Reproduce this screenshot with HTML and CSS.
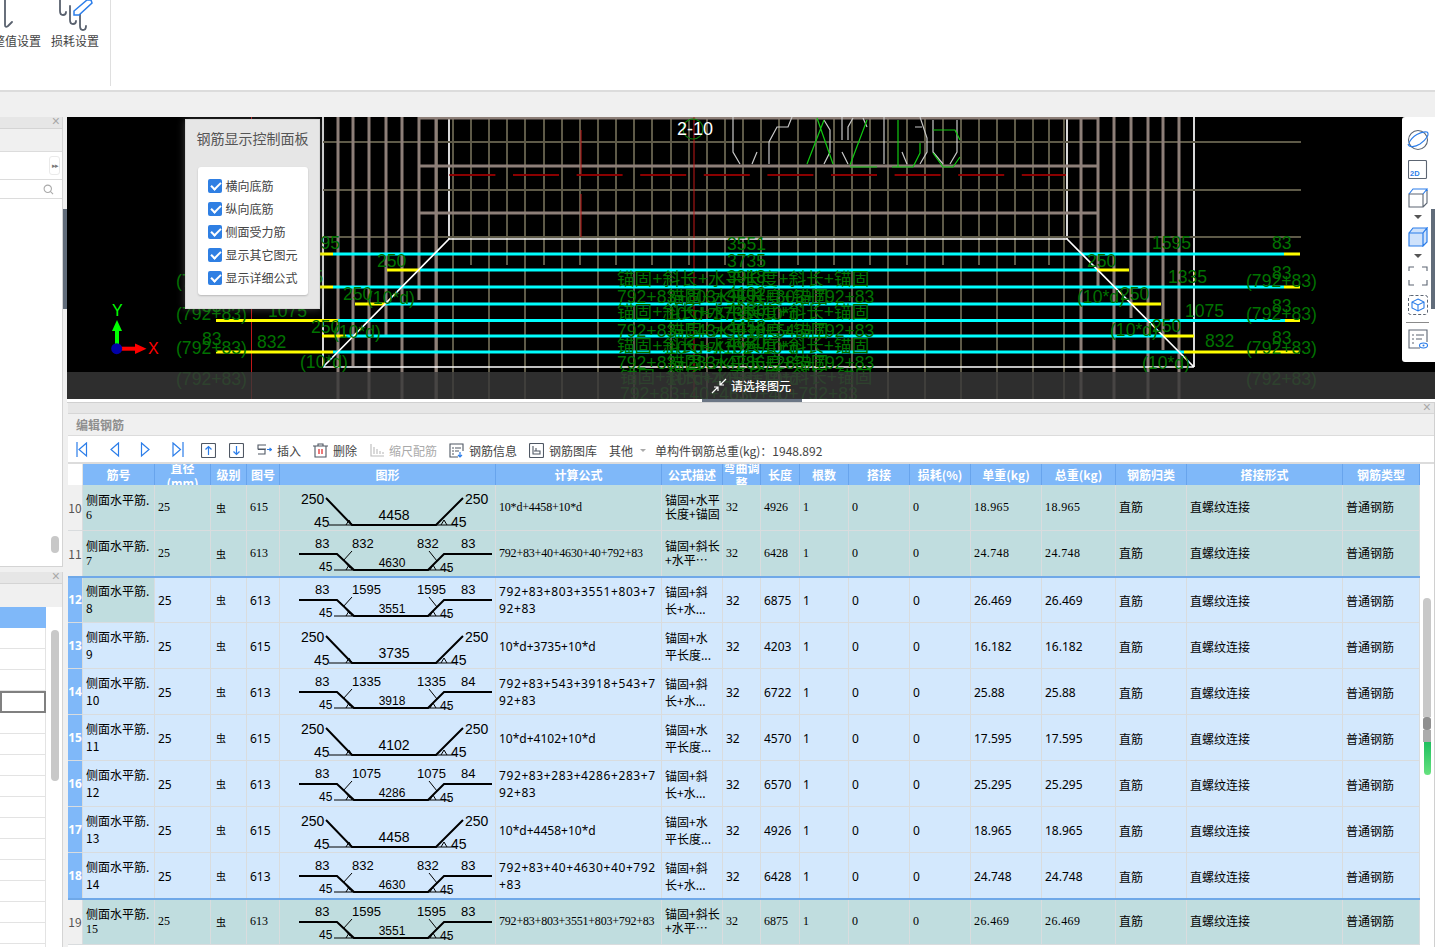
FILE: index.html
```html
<!DOCTYPE html>
<html lang="zh-CN">
<head>
<meta charset="utf-8">
<title>编辑钢筋</title>
<link rel="stylesheet" href="styles.css">
</head>
<body>
<svg class="sprite" aria-hidden="true">
  <symbol id="s615" viewBox="0 0 216 45">
    <path class="thick" d="M46 14L72 41H156L183 14"/>
    <path class="thin" d="M49 41H72M156 41H176M66 41L69 36L72 41M161 41L164 36L167 41"/>
  </symbol>
  <symbol id="s613" viewBox="0 0 216 45">
    <path class="thick" d="M19 24H57L74 40H148L164 24H212"/>
    <path class="thin" d="M54 40H74M148 40H170M63 31L72 21M149 21L157 31M66 40L69 35L72 40M150 40L153 35L156 40M60 26L70 38M160 28L148 40"/>
  </symbol>
</svg>
<div class="app">
  <header class="ribbon">
    <div class="rgroup">
      <div class="ritem clipped">
        <svg class="ricon-a" viewBox="0 0 14 32"><path class="hook" d="M5 0V25Q5 28 8 26L12 22"/></svg>
        <span class="rlabel">调整值设置</span>
      </div>
      <div class="ritem second">
        <svg class="ricon-b" viewBox="0 0 48 32"><path class="hook" d="M9 0V11Q9 15 12 15Q15 15 15 12M19 6V20Q19 24 22 24Q25 24 25 21M29 14V26Q29 30 32 30Q35 30 35 26"/><path class="pencil" d="M23 11L36 0L40 0L41 3L28 15L23 15Z"/></svg>
        <span class="rlabel">损耗设置</span>
      </div>
    </div>
  </header>
  <div class="subbar"></div>
  <div class="main">
    <aside class="side">
      <section class="spanel first">
        <div class="phead"><span class="close">×</span></div>
        <div class="pgray"></div>
        <div class="pexpand"><span class="expand">▸▸</span></div>
        <div class="psearch">
          <svg class="searchicon" viewBox="0 0 12 12"><circle cx="5.2" cy="5.2" r="4"/><path d="M8 8L11 11"/></svg>
        </div>
        <div class="pbody"><span class="thumb thumb-a"></span></div>
      </section>
      <section class="spanel last">
        <div class="phead"><span class="close">×</span></div>
        <div class="pgray2"></div>
        <div class="plist">
          <div class="lcol">
            <div class="li active"></div><div class="li"></div><div class="li"></div><div class="li"></div><div class="li current"></div>
            <div class="li"></div><div class="li"></div><div class="li"></div><div class="li"></div>
            <div class="li"></div><div class="li"></div><div class="li"></div><div class="li"></div>
            <div class="li"></div><div class="li"></div><div class="li"></div><div class="li"></div>
          </div>
          <span class="thumb thumb-b"></span>
        </div>
      </section>
    </aside>
    <div class="vbar"><span class="vhandle"></span></div>
    <div class="work">
      <div class="viewport">
        <svg class="cad" viewBox="67 117 1368 282" width="1368" height="282">
          <g class="wline">
            <path d="M323 117V367M1194 117V367M449 117V239M1067 117V239"/>
          </g>
          <g class="olive">
            <path d="M323 142H1301M323 190H1301M323 237H1301"/>
            <path d="M437 117V399M453 117V399M489 117V399M525 117V399M562 117V399M598 117V399M634 117V399M671 117V399M707 117V399M743 117V399M779 117V399M816 117V399M852 117V399M888 117V399M925 117V399M961 117V399M997 117V399M1033 117V399M1064 117V399"/>
            <path d="M471 117V265M507 117V265M544 117V265M580 117V265M616 117V265M652 117V265M689 117V265M725 117V265M761 117V265M798 117V265M834 117V265M870 117V265M907 117V265M943 117V265M979 117V265M1015 117V265M1049 117V265"/>
          </g>
          <g class="brown">
            <path d="M419 118H1098M419 166H1098M419 213H1098"/>
            <path d="M338 117V399M353 117V366M369 117V399M386 117V335M402 117V399M419 117V300M436 117V399"/>
            <path d="M1081 117V399M1098 117V287M1114 117V399M1131 117V318M1148 117V399M1163 117V350M1179 117V399"/>
          </g>
          <path class="reddash" d="M449.4 175H1066"/>
          <path class="redline" d="M251.5 117V399M694 117V399M581 130V174M581 194V237"/>
          <g class="cyan">
            <path d="M333 254H1284M420 270H1097M333 287H1284M385 304H1131M338 320.500H1285M346 336H1163M333 352H1184"/>
          </g>
          <g class="yellow">
            <path d="M320 254H333M1284 254H1300M387 270H420M1097 270H1129M320 287H333M1284 287H1300M355 304H385M1131 304H1161M216 320.500H338M1285 320.500H1300M322 336H346M1163 336H1194M216 352H333M1184 352H1300"/>
          </g>
          <g class="wline">
            <path d="M323 367H1194M449 239H1067M449 239L323 367M1067 239L1194 367"/>
          </g>
          <g class="graytop">
            <path d="M733 117V152L740 164M757 152L752 164M792 117L788 127H777L769 142V164M824 120L830 130V152L824 164M842 117V140M842 152L848 164M848 140V127L853 118M863 118L867 127M884 117V164M915 127H922M920 117L927 138V152L920 164M902 152L907 164M933 120V152L943 164M957 120V152L950 164"/>
          </g>
          <g class="greentop">
            <circle cx="693" cy="129" r="10"/>
            <path d="M817 118L833 164M824 120L807 164M867 120L850 165M850 167H877M898 120V167M892 167H913M913 167L920 153V143M933 130H955L960 140M933 153L943 167H953L960 157"/>
          </g>
          <text class="wt" x="677" y="135">2-10</text>
          <g class="gt">
            <text x="1152" y="249">1595</text><text x="1272" y="249">83</text><text x="301" y="249">1595</text><text x="201" y="249">83</text>
            <text x="377" y="267">250</text><text x="1087" y="267">250</text>
            <text x="727" y="250">3551</text><text x="727" y="267">3735</text><text x="727" y="283">3918</text><text x="727" y="300">4102</text><text x="727" y="316">4286</text><text x="727" y="333">4458</text><text x="727" y="349">4630</text>
            <text x="1246" y="287">(792+83)</text><text x="1246" y="320">(792+83)</text><text x="1246" y="354">(792+83)</text><text x="1246" y="385">(792+83)</text>
            <text x="176" y="287">(792+83)</text><text x="176" y="320">(792+83)</text><text x="176" y="354">(792+83)</text><text x="176" y="385">(792+83)</text>
            <text x="1272" y="279">83</text><text x="1272" y="312">83</text><text x="1272" y="344">83</text>
            <text x="202" y="312">83</text><text x="202" y="345">83</text>
            <text x="1168" y="283">1335</text><text x="284" y="283">1335</text>
            <text x="1185" y="317">1075</text><text x="268" y="317">1075</text>
            <text x="1205" y="347">832</text><text x="257" y="348">832</text>
            <text x="343" y="300">250</text><text x="1120" y="300">250</text>
            <text x="311" y="333">250</text><text x="1152" y="332">250</text>
            <text x="367" y="304">(10*d)</text><text x="1077" y="303">(10*d)</text>
            <text x="333" y="338">(10*d)</text><text x="1110" y="336">(10*d)</text>
            <text x="300" y="368">(10*d)</text><text x="1142" y="369">(10*d)</text>
            <text x="617" y="285">锚固+斜长+水平长度+斜长+锚固</text>
            <text x="617" y="303">792+83+803+3551+803+792+83</text>
            <text x="667" y="303">锚固+水平长度+锚固</text>
            <text x="667" y="320">10*d+3735+10*d</text>
            <text x="617" y="318">锚固+斜长+水平长度+斜长+锚固</text>
            <text x="617" y="337">792+83+543+3918+543+792+83</text>
            <text x="667" y="337">锚固+水平长度+锚固</text>
            <text x="667" y="354">10*d+4102+10*d</text>
            <text x="617" y="352">锚固+斜长+水平长度+斜长+锚固</text>
            <text x="617" y="369">792+83+283+4286+283+792+83</text>
            <text x="667" y="369">锚固+水平长度+锚固</text>
            <text x="667" y="385">10*d+4458+10*d</text>
            <text x="620" y="383">锚固+斜长+水平长度+斜长+锚固</text>
            <text x="620" y="400">792+83+40+4630+40+792+83</text>
          </g>
          <g class="axes">
            <path class="ay" d="M117 345V330"/><path class="ayh" d="M117 320L122 331H112Z"/>
            <path class="ax" d="M120 348.700H135"/><path class="axh" d="M146.500 348.700L135 343.500V354Z"/>
            <circle class="ao" cx="116.700" cy="348.700" r="5.500"/>
            <text class="ayt" x="112" y="316">Y</text><text class="axt" x="148" y="354">X</text>
          </g>
        </svg>
        <div class="status">
          <svg class="sicon" viewBox="0 0 16 16"><path d="M15 1L9 7M9 3V7H13M1 15L7 9M3 9H7V13"/></svg>
          <span>请选择图元</span>
        </div>
        <div class="control">
          <div class="ctitle">钢筋显示控制面板</div>
          <div class="ccard">
            <label class="copt"><span class="cb"></span>横向底筋</label>
            <label class="copt"><span class="cb"></span>纵向底筋</label>
            <label class="copt"><span class="cb"></span>侧面受力筋</label>
            <label class="copt"><span class="cb"></span>显示其它图元</label>
            <label class="copt"><span class="cb"></span>显示详细公式</label>
          </div>
        </div>
        <div class="vtools">
          <svg class="vt v-orbit" viewBox="0 0 22 22"><circle class="dk" cx="11" cy="11" r="9.500"/><path class="bl" d="M2 14C5 7 14 2 20 3C23 5 19 11 13 15C8 18 2 19 1 15"/></svg>
          <svg class="vt v-2d" viewBox="0 0 20 20"><rect class="dk" x="0.500" y="0.500" width="18" height="18" rx="1"/><text class="t2d" x="2" y="16">2D</text></svg>
          <svg class="vt v-cube" viewBox="0 0 20 20"><path class="dk" d="M1 6H15V19H1ZM15 19L19 15V2"/><path class="bl" d="M1 6L5 1H19L15 6M19 1V3"/></svg>
          <span class="caret"></span>
          <svg class="vt v-cube" viewBox="0 0 20 20"><path class="blf" d="M1 6H15V19H1ZM15 19L19 15V1L15 6ZM1 6L5 1H19L15 6"/></svg>
          <span class="caret"></span>
          <svg class="vt v-dash" viewBox="0 0 20 20"><path class="dk" d="M1 5V1H6M14 1H19V5M19 14V19H14M6 19H1V14"/></svg>
          <svg class="vt v-dashcube" viewBox="0 0 20 20"><rect class="dash" x="0.500" y="0.500" width="19" height="19" rx="2"/><path class="bl" d="M10 4L16 7V13L10 16L4 13V7ZM4 7L10 10L16 7M10 10V16"/></svg>
          <span class="vsep"></span>
          <svg class="vt v-list" viewBox="0 0 20 20"><path class="dk" d="M12 19H1V1H19V13"/><path class="dk" d="M4 6H6M8 6H16M4 10H6M8 10H14M4 14H6"/><ellipse class="bl" cx="15.500" cy="16.500" rx="4" ry="2.500"/><circle class="bld" cx="15.500" cy="16.500" r="1"/></svg>
        </div>
        <span class="rhandle"></span>
      </div>
      <div class="hsplit"><span class="hhandle"></span></div>
      <section class="edit">
        <div class="ehead"><span class="close">×</span></div>
        <div class="etitle">编辑钢筋</div>
        <div class="toolbar">
          <span class="tb"><svg class="ti" viewBox="0 0 12 16"><path class="blue" d="M1 0V15M10.500 1L3 7.500L10.500 14Z"/></svg></span>
          <span class="tb"><svg class="ti" viewBox="0 0 12 16"><path class="blue" d="M9.500 1L2 7.500L9.500 14Z"/></svg></span>
          <span class="tb"><svg class="ti" viewBox="0 0 12 16"><path class="blue" d="M1.500 1L9 7.500L1.500 14Z"/></svg></span>
          <span class="tb"><svg class="ti" viewBox="0 0 12 16"><path class="blue" d="M1 1L8.500 7.500L1 14ZM11 0V15"/></svg></span>
          <span class="tb"><svg class="ti ti-w" viewBox="0 0 15 15"><rect class="dark" x="0.500" y="0.500" width="14" height="14" rx="1"/><path class="blue" d="M7.500 12V3.500M4.500 6.500L7.500 3.500L10.500 6.500"/></svg></span>
          <span class="tb"><svg class="ti ti-w" viewBox="0 0 15 15"><rect class="dark" x="0.500" y="0.500" width="14" height="14" rx="1"/><path class="blue" d="M7.500 3V11.500M4.500 8.500L7.500 11.500L10.500 8.500"/></svg></span>
          <span class="tb"><svg class="ti ti-w" viewBox="0 0 15 15"><path class="dark" d="M9 2H1V6H9M1 11H8V6.500H1"/><path class="blue" d="M10 6.500H14M12.500 5L14.500 6.500L12.500 8"/></svg>插入</span>
          <span class="tb"><svg class="ti ti-w" viewBox="0 0 15 15"><path class="dark" d="M2 3H13V14H2ZM0 3H15M5 3V1H10V3"/><path class="red" d="M6 6V11M9 6V11"/></svg>删除</span>
          <span class="tb off"><svg class="ti ti-w" viewBox="0 0 15 15"><path class="grayl" d="M2 1V13H15M5 4V11M8 6V11M11 8V11M14 9V11"/></svg>缩尺配筋</span>
          <span class="tb"><svg class="ti ti-w" viewBox="0 0 15 15"><path class="dark" d="M9 14H1V1H14V8"/><path class="dark" d="M3 5H5M6 5H12M3 8H5M6 8H10M3 11H5"/><path class="blue" d="M11 9V14M9 12L11 14L13 12"/></svg>钢筋信息</span>
          <span class="tb"><svg class="ti ti-w" viewBox="0 0 15 15"><rect class="dark" x="0.500" y="0.500" width="14" height="14" rx="1"/><path class="dark" d="M4 3V11H11V8H5M7 8V5"/></svg>钢筋图库</span>
          <span class="tb">其他<span class="tcaret"></span></span>
          <span class="ttotal">单构件钢筋总重(kg)：1948.892</span>
        </div>
        <div class="tablewrap">
          <div class="grid">
            <div class="row head">
              <div class="c"></div><div class="c">筋号</div><div class="c">直径<br>(mm)</div><div class="c">级别</div><div class="c">图号</div><div class="c">图形</div><div class="c">计算公式</div><div class="c">公式描述</div><div class="c">弯曲调<br>整</div><div class="c">长度</div><div class="c">根数</div><div class="c">搭接</div><div class="c">损耗(%)</div><div class="c">单重(kg)</div><div class="c">总重(kg)</div><div class="c">钢筋归类</div><div class="c">搭接形式</div><div class="c">钢筋类型</div>
            </div>

            <div class="row teal">
              <div class="c num">10</div><div class="c name">侧面水平筋.<br><span class="d">6</span></div><div class="c d">25</div><div class="c lv">虫</div><div class="c d">615</div>
              <div class="c shape"><svg class="fig" viewBox="0 0 216 45"><use href="#s615"/><text class="l14" x="21" y="20">250</text><text class="l14" x="34" y="43">45</text><text class="l14 mid" x="114" y="36">4458</text><text class="l14" x="185" y="20">250</text><text class="l14" x="171" y="43">45</text></svg></div>
              <div class="c d fd">10*d+4458+10*d</div><div class="c cj">锚固+水平<br>长度+锚固</div><div class="c d">32</div><div class="c d">4926</div><div class="c d">1</div><div class="c d">0</div><div class="c d">0</div><div class="c d wt2">18.965</div><div class="c d wt2">18.965</div><div class="c tx">直筋</div><div class="c tx">直螺纹连接</div><div class="c tx">普通钢筋</div>
            </div>

            <div class="row teal">
              <div class="c num">11</div><div class="c name">侧面水平筋.<br><span class="d">7</span></div><div class="c d">25</div><div class="c lv">虫</div><div class="c d">613</div>
              <div class="c shape"><svg class="fig" viewBox="0 0 216 45"><use href="#s613"/><text class="l13" x="35" y="18">83</text><text class="l13" x="72" y="18">832</text><text class="l13" x="137" y="18">832</text><text class="l13" x="181" y="18">83</text><text class="l12" x="39" y="41">45</text><text class="l12 mid" x="112" y="37">4630</text><text class="l12" x="160" y="42">45</text></svg></div>
              <div class="c d fd">792+83+40+4630+40+792+83</div><div class="c cj">锚固+斜长<br>+水平…</div><div class="c d">32</div><div class="c d">6428</div><div class="c d">1</div><div class="c d">0</div><div class="c d">0</div><div class="c d wt2">24.748</div><div class="c d wt2">24.748</div><div class="c tx">直筋</div><div class="c tx">直螺纹连接</div><div class="c tx">普通钢筋</div>
            </div>

            <div class="row sel top">
              <div class="c num">12</div><div class="c name act">侧面水平筋.<br>8</div><div class="c">25</div><div class="c lv">虫</div><div class="c">613</div>
              <div class="c shape"><svg class="fig" viewBox="0 0 216 45"><use href="#s613"/><text class="l13" x="35" y="18">83</text><text class="l13" x="72" y="18">1595</text><text class="l13" x="137" y="18">1595</text><text class="l13" x="181" y="18">83</text><text class="l12" x="39" y="41">45</text><text class="l12 mid" x="112" y="37">3551</text><text class="l12" x="160" y="42">45</text></svg></div>
              <div class="c long">792+83+803+3551+803+7<br>92+83</div><div class="c cj">锚固+斜<br>长+水...</div><div class="c">32</div><div class="c">6875</div><div class="c">1</div><div class="c">0</div><div class="c">0</div><div class="c">26.469</div><div class="c">26.469</div><div class="c">直筋</div><div class="c">直螺纹连接</div><div class="c">普通钢筋</div>
            </div>

            <div class="row sel">
              <div class="c num">13</div><div class="c name">侧面水平筋.<br>9</div><div class="c">25</div><div class="c lv">虫</div><div class="c">615</div>
              <div class="c shape"><svg class="fig" viewBox="0 0 216 45"><use href="#s615"/><text class="l14" x="21" y="20">250</text><text class="l14" x="34" y="43">45</text><text class="l14 mid" x="114" y="36">3735</text><text class="l14" x="185" y="20">250</text><text class="l14" x="171" y="43">45</text></svg></div>
              <div class="c">10*d+3735+10*d</div><div class="c cj">锚固+水<br>平长度...</div><div class="c">32</div><div class="c">4203</div><div class="c">1</div><div class="c">0</div><div class="c">0</div><div class="c">16.182</div><div class="c">16.182</div><div class="c">直筋</div><div class="c">直螺纹连接</div><div class="c">普通钢筋</div>
            </div>

            <div class="row sel">
              <div class="c num">14</div><div class="c name">侧面水平筋.<br>10</div><div class="c">25</div><div class="c lv">虫</div><div class="c">613</div>
              <div class="c shape"><svg class="fig" viewBox="0 0 216 45"><use href="#s613"/><text class="l13" x="35" y="18">83</text><text class="l13" x="72" y="18">1335</text><text class="l13" x="137" y="18">1335</text><text class="l13" x="181" y="18">84</text><text class="l12" x="39" y="41">45</text><text class="l12 mid" x="112" y="37">3918</text><text class="l12" x="160" y="42">45</text></svg></div>
              <div class="c long">792+83+543+3918+543+7<br>92+83</div><div class="c cj">锚固+斜<br>长+水...</div><div class="c">32</div><div class="c">6722</div><div class="c">1</div><div class="c">0</div><div class="c">0</div><div class="c">25.88</div><div class="c">25.88</div><div class="c">直筋</div><div class="c">直螺纹连接</div><div class="c">普通钢筋</div>
            </div>

            <div class="row sel">
              <div class="c num">15</div><div class="c name">侧面水平筋.<br>11</div><div class="c">25</div><div class="c lv">虫</div><div class="c">615</div>
              <div class="c shape"><svg class="fig" viewBox="0 0 216 45"><use href="#s615"/><text class="l14" x="21" y="20">250</text><text class="l14" x="34" y="43">45</text><text class="l14 mid" x="114" y="36">4102</text><text class="l14" x="185" y="20">250</text><text class="l14" x="171" y="43">45</text></svg></div>
              <div class="c">10*d+4102+10*d</div><div class="c cj">锚固+水<br>平长度...</div><div class="c">32</div><div class="c">4570</div><div class="c">1</div><div class="c">0</div><div class="c">0</div><div class="c">17.595</div><div class="c">17.595</div><div class="c">直筋</div><div class="c">直螺纹连接</div><div class="c">普通钢筋</div>
            </div>

            <div class="row sel">
              <div class="c num">16</div><div class="c name">侧面水平筋.<br>12</div><div class="c">25</div><div class="c lv">虫</div><div class="c">613</div>
              <div class="c shape"><svg class="fig" viewBox="0 0 216 45"><use href="#s613"/><text class="l13" x="35" y="18">83</text><text class="l13" x="72" y="18">1075</text><text class="l13" x="137" y="18">1075</text><text class="l13" x="181" y="18">84</text><text class="l12" x="39" y="41">45</text><text class="l12 mid" x="112" y="37">4286</text><text class="l12" x="160" y="42">45</text></svg></div>
              <div class="c long">792+83+283+4286+283+7<br>92+83</div><div class="c cj">锚固+斜<br>长+水...</div><div class="c">32</div><div class="c">6570</div><div class="c">1</div><div class="c">0</div><div class="c">0</div><div class="c">25.295</div><div class="c">25.295</div><div class="c">直筋</div><div class="c">直螺纹连接</div><div class="c">普通钢筋</div>
            </div>

            <div class="row sel">
              <div class="c num">17</div><div class="c name">侧面水平筋.<br>13</div><div class="c">25</div><div class="c lv">虫</div><div class="c">615</div>
              <div class="c shape"><svg class="fig" viewBox="0 0 216 45"><use href="#s615"/><text class="l14" x="21" y="20">250</text><text class="l14" x="34" y="43">45</text><text class="l14 mid" x="114" y="36">4458</text><text class="l14" x="185" y="20">250</text><text class="l14" x="171" y="43">45</text></svg></div>
              <div class="c">10*d+4458+10*d</div><div class="c cj">锚固+水<br>平长度...</div><div class="c">32</div><div class="c">4926</div><div class="c">1</div><div class="c">0</div><div class="c">0</div><div class="c">18.965</div><div class="c">18.965</div><div class="c">直筋</div><div class="c">直螺纹连接</div><div class="c">普通钢筋</div>
            </div>

            <div class="row sel">
              <div class="c num">18</div><div class="c name">侧面水平筋.<br>14</div><div class="c">25</div><div class="c lv">虫</div><div class="c">613</div>
              <div class="c shape"><svg class="fig" viewBox="0 0 216 45"><use href="#s613"/><text class="l13" x="35" y="18">83</text><text class="l13" x="72" y="18">832</text><text class="l13" x="137" y="18">832</text><text class="l13" x="181" y="18">83</text><text class="l12" x="39" y="41">45</text><text class="l12 mid" x="112" y="37">4630</text><text class="l12" x="160" y="42">45</text></svg></div>
              <div class="c long">792+83+40+4630+40+792<br>+83</div><div class="c cj">锚固+斜<br>长+水...</div><div class="c">32</div><div class="c">6428</div><div class="c">1</div><div class="c">0</div><div class="c">0</div><div class="c">24.748</div><div class="c">24.748</div><div class="c">直筋</div><div class="c">直螺纹连接</div><div class="c">普通钢筋</div>
            </div>

            <div class="row teal top">
              <div class="c num">19</div><div class="c name">侧面水平筋.<br><span class="d">15</span></div><div class="c d">25</div><div class="c lv">虫</div><div class="c d">613</div>
              <div class="c shape"><svg class="fig" viewBox="0 0 216 45"><use href="#s613"/><text class="l13" x="35" y="18">83</text><text class="l13" x="72" y="18">1595</text><text class="l13" x="137" y="18">1595</text><text class="l13" x="181" y="18">83</text><text class="l12" x="39" y="41">45</text><text class="l12 mid" x="112" y="37">3551</text><text class="l12" x="160" y="42">45</text></svg></div>
              <div class="c d fd">792+83+803+3551+803+792+83</div><div class="c cj">锚固+斜长<br>+水平…</div><div class="c d">32</div><div class="c d">6875</div><div class="c d">1</div><div class="c d">0</div><div class="c d">0</div><div class="c d wt2">26.469</div><div class="c d wt2">26.469</div><div class="c tx">直筋</div><div class="c tx">直螺纹连接</div><div class="c tx">普通钢筋</div>
            </div>
          </div>
          <div class="scroll">
            <span class="sthumb"></span>
            <span class="sknob"></span>
            <span class="smid"></span>
            <span class="sgreen"></span>
          </div>
        </div>
      </section>
    </div>
  </div>
</div>
</body>
</html>
```

FILE: styles.css
```css
* { box-sizing: border-box; }
html, body { margin: 0; padding: 0; background: #f0f0f0; }
body { font-family: "Noto Sans CJK SC", "Noto Sans", sans-serif; font-size: 12px; color: #000; }
.sprite { position: absolute; width: 0; height: 0; }
.app { width: 1435px; height: 947px; overflow: hidden; display: flex; flex-direction: column; }

/* ribbon */
.ribbon { height: 92px; flex: none; background: #fff; border-bottom: 2px solid #dcdcdc; display: flex; }
.rgroup { width: 111px; height: 86px; border-right: 1px solid #dfdfdf; display: flex; }
.ritem { display: flex; flex-direction: column; height: 86px; }
.clipped { width: 41px; overflow: hidden; align-items: flex-end; }
.second { width: 48px; margin-left: 10px; align-items: center; }
.ricon-a { width: 14px; height: 32px; align-self: flex-start; margin-left: 0; flex: none; }
.ricon-b { width: 48px; height: 32px; flex: none; }
.rlabel { height: 20px; line-height: 19px; white-space: nowrap; color: #444; flex: none; margin-top: -1px; }
.hook { fill: none; stroke: #59616e; stroke-width: 1.8; stroke-linecap: round; }
.pencil { fill: #fff; stroke: #2b7de9; stroke-width: 1.5; }
.subbar { height: 25px; flex: none; background: #f0f0f0; }

/* main */
.main { flex: 1; display: flex; min-height: 0; }
.side { width: 63px; flex: none; display: flex; flex-direction: column; gap: 5px; }
.spanel { background: #fff; border-right: 1px solid #d4d4d4; display: flex; flex-direction: column; }
.spanel.first { height: 450px; border-bottom: 1px solid #d4d4d4; }
.spanel.last { flex: 1; min-height: 0; }
.phead { height: 12px; flex: none; background: #e6e6e6; border-bottom: 1px solid #d4d4d4; position: relative; }
.close { position: absolute; right: 2px; top: -4px; font-size: 14px; line-height: 17px; color: #a8a8a8; font-family: "Liberation Sans", sans-serif; }
.pgray { height: 23px; background: #f0f0f0; border-bottom: 1px solid #dcdcdc; flex: none; }
.pexpand { height: 28px; flex: none; border-bottom: 1px solid #dcdcdc; display: flex; align-items: center; justify-content: flex-end; padding-right: 2px; }
.expand { width: 11px; height: 19px; border: 1px solid #eaeaea; border-radius: 3px; font-size: 7px; line-height: 17px; text-align: center; color: #777; letter-spacing: -1px; }
.psearch { height: 19px; flex: none; border-bottom: 1px solid #dcdcdc; display: flex; align-items: center; justify-content: flex-end; padding-right: 8px; }
.searchicon { width: 11px; height: 11px; fill: none; stroke: #a9a9a9; stroke-width: 1.200; }
.pbody { flex: 1; position: relative; }
.thumb { display: block; background: #c8c8c8; border-radius: 4px; width: 8px; }
.thumb-a { position: absolute; left: 51px; top: 337px; height: 17px; }
.pgray2 { height: 23px; flex: none; background: #f0f0f0; }
.plist { flex: 1; display: flex; min-height: 0; overflow: hidden; }
.lcol { width: 46px; flex: none; }
.li { height: 21px; border-bottom: 1px solid #e3e3e3; border-right: 1px solid #e3e3e3; }
.li.active { background: #7fb8f9; height: 21px; border: 0; }
.li.current { border: 2px solid #808080; height: 22px; }
.thumb-b { margin: 23px 0 0 5px; height: 151px; flex: none; }

.vbar { width: 4px; flex: none; background: #f0f0f0; }
.vhandle { display: block; width: 4px; height: 100px; margin-top: 92px; background: #616c7a; }

.work { flex: 1; min-width: 0; display: flex; flex-direction: column; }

/* viewport */
.viewport { height: 282px; flex: none; position: relative; background: #000; overflow: hidden; }
.cad { display: block; }
.cad path { fill: none; }
.olive path { stroke: #5e5a48; stroke-width: 2; }
.brown path { stroke: #8d7f78; stroke-width: 3; }
.reddash { stroke: #8b0000; stroke-width: 2; stroke-dasharray: 46 17.6; }
.redline { stroke: #c01818; stroke-width: 1; }
.cyan path { stroke: #00ffff; stroke-width: 3; }
.yellow path { stroke: #ffff00; stroke-width: 3; }
.wline path { stroke: #fff; stroke-width: 1.700; }
.graytop path { stroke: #c8c8c8; stroke-width: 1.200; }
.greentop path, .greentop circle { fill: none; stroke: #11c811; stroke-width: 1.200; }
.greentop circle { stroke: #0a7a0a; }
.wt { fill: #fff; font: 18px "Liberation Sans", sans-serif; }
.gt text { fill: #007200; font: 17.600px "Liberation Sans", "Noto Sans CJK SC", sans-serif; }
.ay { stroke: #00ff00; stroke-width: 4; }
.ayh { fill: #00ff00 !important; }
.ax { stroke: #ff0000; stroke-width: 4; }
.axh { fill: #ff0000 !important; }
.ao { fill: #0000a8; }
.ayt { fill: #00ff00; font: 16px "Liberation Sans", sans-serif; }
.axt { fill: #ff0000; font: 16px "Liberation Sans", sans-serif; }
.status { position: absolute; left: 0; right: 0; bottom: 0; height: 27px; background: rgba(56, 56, 56, .82); display: flex; align-items: center; justify-content: flex-start; gap: 4px; color: #fff; padding: 0 0 0 644px; font-weight: 500; }
.sicon { width: 16px; height: 16px; fill: none; stroke: #fff; stroke-width: 1.200; }

.control { position: absolute; left: 118px; top: 2px; width: 135px; height: 190px; background: #e6e6e6; box-shadow: 0 0 8px rgba(120, 120, 120, .5); border: 1px solid #d8d8d8; display: flex; flex-direction: column; align-items: center; }
.ctitle { font-size: 14px; line-height: 20px; margin-top: 8px; color: #555; }
.ccard { width: 110px; height: 128px; margin-top: 19px; background: #fff; border-radius: 3px; box-shadow: 0 1px 2px rgba(0, 0, 0, .2); padding: 10px 0 0 10px; display: flex; flex-direction: column; gap: 5px; }
.copt { display: flex; align-items: center; gap: 4px; height: 18px; line-height: 18px; color: #444; white-space: nowrap; }
.cb { width: 14px; height: 14px; background: #2f7fe3; border-radius: 2px; position: relative; flex: none; }
.cb::after { content: ""; position: absolute; left: 3px; top: 3px; width: 8px; height: 4px; border-left: 2px solid #fff; border-bottom: 2px solid #fff; transform: rotate(-45deg); }

.vtools { position: absolute; left: 1335px; top: 0; width: 33px; height: 245px; background: #fff; border-radius: 3px 0 0 3px; display: flex; flex-direction: column; align-items: center; padding-top: 12px; padding-right: 2px; }
.vt { flex: none; display: block; fill: none; }
.dk { fill: none; stroke: #5c6572; stroke-width: 1.100; }
.bl { fill: none; stroke: #2b7de9; stroke-width: 1.100; }
.bld { fill: #2b7de9; }
.blf { fill: #cfe2fb; stroke: #2b7de9; stroke-width: 1.200; }
.dash { fill: none; stroke: #5c6572; stroke-width: 1; stroke-dasharray: 3 2; }
.t2d { fill: #2b7de9; font: bold 7.500px "Liberation Sans", sans-serif; }
.v-orbit { width: 22px; height: 22px; margin-bottom: 9px; }
.v-2d { width: 20px; height: 20px; margin-bottom: 8px; }
.v-cube { width: 20px; height: 20px; }
.caret { width: 0; height: 0; flex: none; border-left: 4px solid transparent; border-right: 4px solid transparent; border-top: 4px solid #555; margin: 7px 0 8px; }
.v-dash { width: 20px; height: 20px; margin-top: 0; margin-bottom: 9px; }
.v-dashcube { width: 20px; height: 20px; margin-bottom: 7px; }
.vsep { width: 23px; height: 1px; background: #8a8a8a; flex: none; margin-bottom: 6px; }
.v-list { width: 20px; height: 20px; }
.rhandle { position: absolute; right: 0; top: 92px; width: 4px; height: 100px; background: #616c7a; }

.hsplit { height: 4px; flex: none; background: #fff; border-bottom: 1px solid #d0d0d0; }
.hhandle { display: block; width: 100px; height: 3px; margin-left: 635px; background: #6b7685; }

/* edit panel */
.edit { flex: 1; min-height: 0; display: flex; flex-direction: column; margin-left: 1px; border-right: 1px solid #d0d0d0; background: #fff; }
.ehead { height: 11px; flex: none; background: #e6e6e6; border-bottom: 1px solid #d6d6d6; position: relative; }
.ehead .close { right: 3px; }
.etitle { height: 22px; flex: none; background: #f0f0f0; border-bottom: 1px solid #dcdcdc; padding-left: 8px; line-height: 21px; font-weight: 700; color: #8f8f8f; }
.toolbar { height: 28px; flex: none; border-bottom: 2px solid #dcdcdc; display: grid; grid-template-columns: 33px 31px 32px 29px 28px 28px 56px 56px 80px 80px 80px 46px auto; padding: 2px 0 0 8px; align-items: center; color: #444; white-space: nowrap; }
.tb { display: flex; align-items: center; gap: 5px; }
.tb.off { color: #aaa; }
.ti { width: 12px; height: 16px; fill: none; flex: none; }
.ti-w { width: 15px; height: 15px; }
.blue { fill: none; stroke: #2b7de9; stroke-width: 1.200; }
.dark { fill: none; stroke: #4f5763; stroke-width: 1.100; }
.red { fill: none; stroke: #e02020; stroke-width: 1.200; }
.grayl { fill: none; stroke: #bbb; stroke-width: 1.100; }
.tcaret { width: 0; height: 0; margin-left: 2px; border-left: 3px solid transparent; border-right: 3px solid transparent; border-top: 3px solid #aaa; }
.ttotal { color: #444; }

/* table */
.tablewrap { flex: 1; min-height: 0; display: flex; overflow: hidden; }
.grid { width: 1352px; flex: none; }
.row { display: grid; grid-template-columns: 15px 72px 56px 36px 33px 216px 166px 61px 38px 39px 49px 61px 61px 71px 74px 71px 156px 77px; height: 46px; position: relative; }
.c { border-right: 1px solid #d9dcde; border-bottom: 1px solid #d9dcde; padding-left: 3px; display: flex; align-items: center; white-space: nowrap; overflow: hidden; }
.head { height: 21px; background: #7fb8f9; color: #fff; font-weight: 700; overflow: hidden; }
.head .c { display: block; padding: 3px 0 0; text-align: center; border-color: #68a4ec; line-height: 15px; }
.head .c:first-child { background: #fff; border-color: #e4e4e4; }
.head .c:nth-child(3), .head .c:nth-child(9) { padding-top: 0; transform: translateY(-4px); height: 28px; }
.teal .c { background: #c0dddf; }
.teal .tx { padding-bottom: 2px; }
.sel .c { background: #d3e8fd; padding-top: 2px; font-family: "Noto Sans", "Noto Sans CJK SC", sans-serif; }
.sel .c.cj, .sel .c.name { font-family: "Noto Sans CJK SC", sans-serif; }
.num { padding: 0; justify-content: center; background: #f0f0f0 !important; color: #555; overflow: visible; }
.sel .num { background: #7fb8f9 !important; color: #fff; font-weight: 700; padding: 0; }
.name { display: block; line-height: 14px; padding-top: 8px; }
.sel .name { line-height: 17px; padding-top: 5px; }
.name.act { background: #c0dddf !important; }
.d { font-family: "Liberation Serif", serif; font-size: 12px; }
.wt2 { letter-spacing: .4px; }
.fd { letter-spacing: -.2px; }
.lv, .sel .lv { padding-left: 5px; padding-top: 0; font-size: 10px; }
.cj { display: block; line-height: 14px; padding-top: 8px; }
.sel .cj { line-height: 17px; padding-top: 6px; }
.sel .long { display: block; line-height: 17px; padding-top: 6px; letter-spacing: .6px; }
.row .shape { padding: 0; display: block; }
.fig { display: block; width: 216px; height: 45px; margin-top: -1px; }
.thick { fill: none; stroke: #000; stroke-width: 2; }
.thin { fill: none; stroke: #000; stroke-width: 1; }
.fig text { fill: #000; font-family: "Liberation Sans", sans-serif; }
.l14 { font-size: 14px; }
.l13 { font-size: 13px; }
.l12 { font-size: 12px; }
.mid { text-anchor: middle; }
.top::before { content: ""; position: absolute; left: 0; right: 0; top: -1px; height: 2px; background: #6fa8e8; z-index: 1; }

/* table scrollbar */
.scroll { flex: 1; background: #fff; display: flex; flex-direction: column; align-items: flex-start; padding: 134px 0 0 3px; }
.sthumb { width: 8px; height: 119px; background: #c8c8c8; flex: none; border-radius: 4px 4px 0 0; }
.sknob { width: 8px; height: 13px; background: #8f8f8f; border-radius: 3px; flex: none; }
.smid { width: 8px; height: 12px; background: #acacac; flex: none; }
.sgreen { width: 7px; height: 33px; background: linear-gradient(#1fbf5f, #66e27f); border-radius: 0 0 4px 4px; flex: none; margin-left: .5px; }
```
